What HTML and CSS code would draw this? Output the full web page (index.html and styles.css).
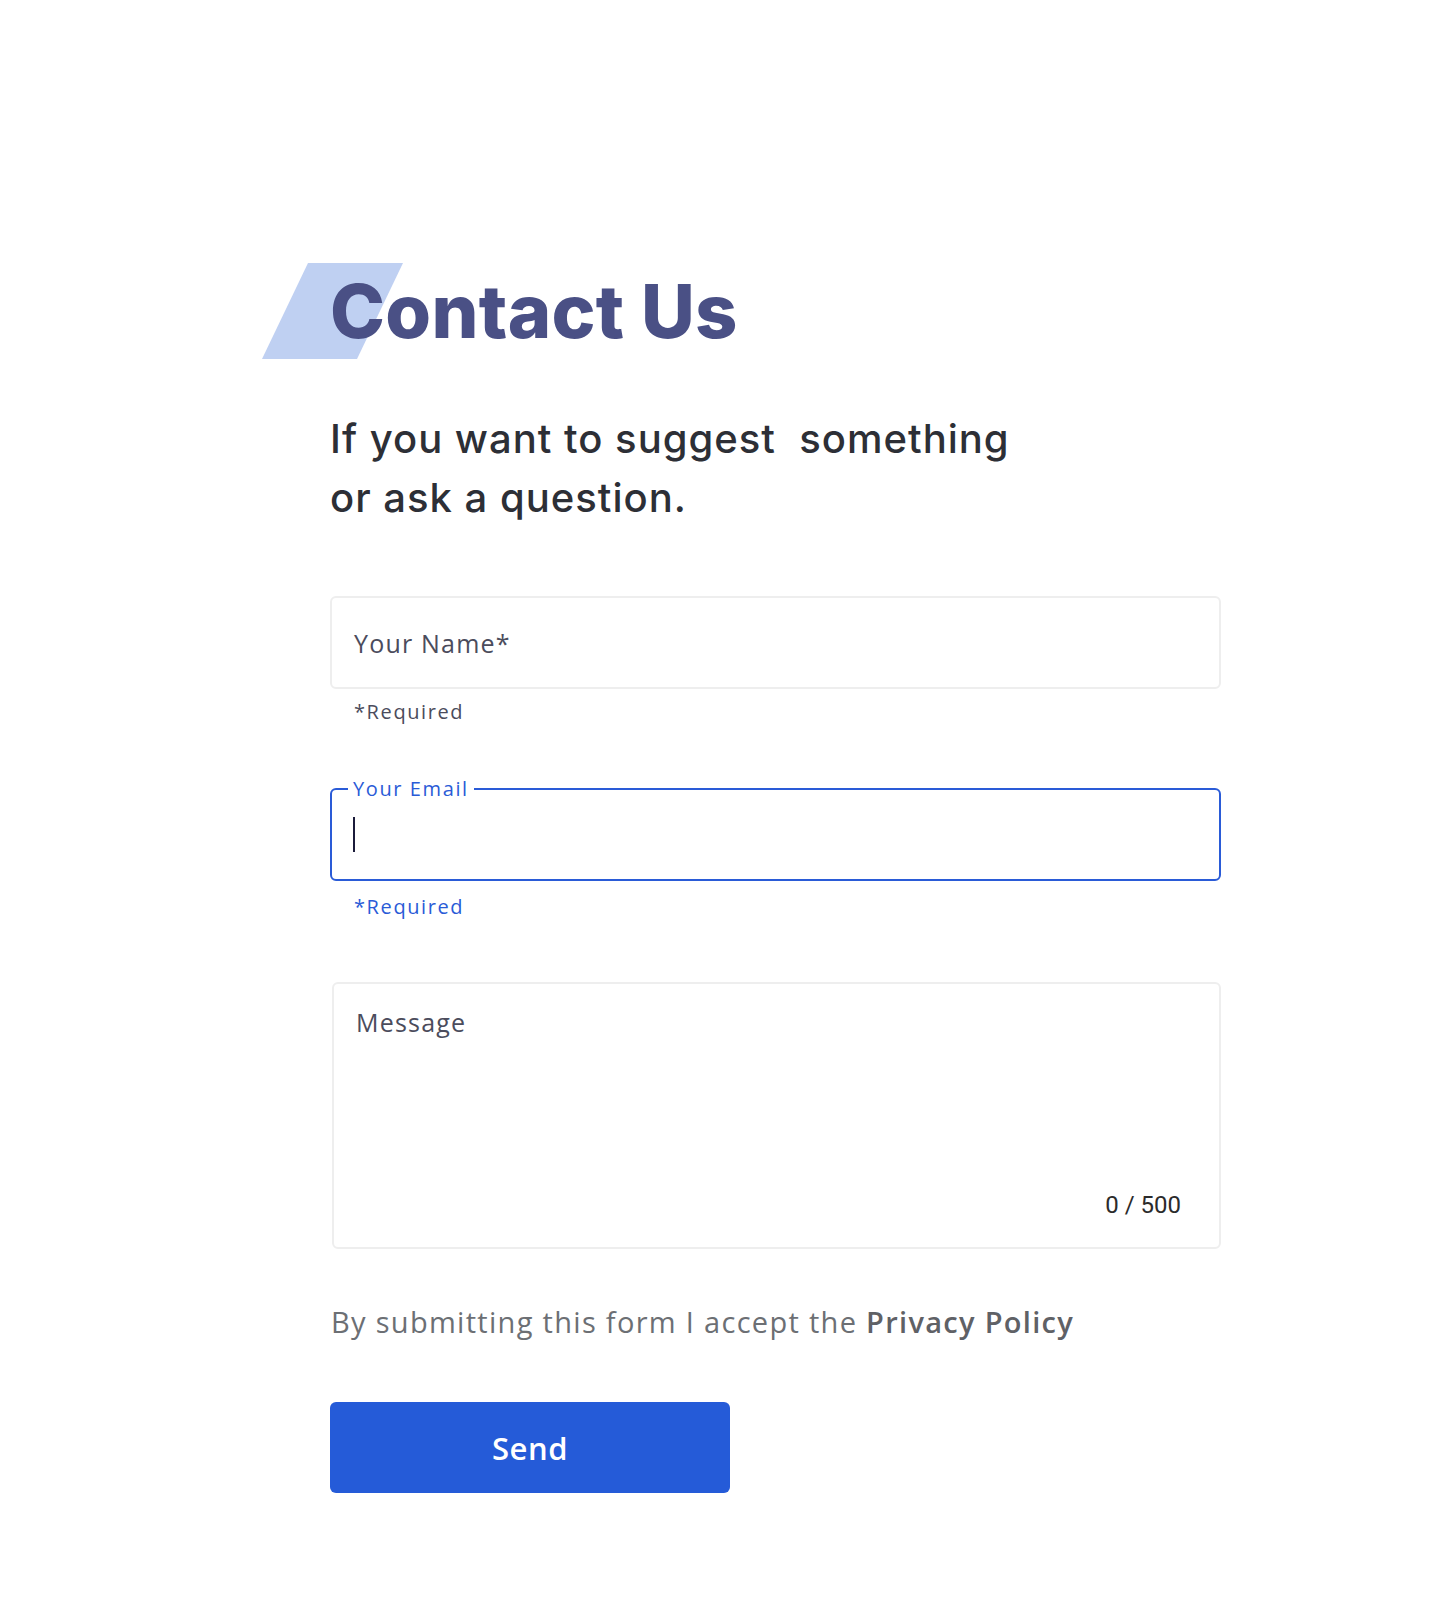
FILE: index.html
```html
<!DOCTYPE html>
<html lang="en">
<head>
<meta charset="utf-8">
<title>Contact Us</title>
<link rel="stylesheet" href="styles.css">
</head>
<body>
<main class="contact">
  <header class="contact-head">
    <h1 class="title">Contact Us</h1>
  </header>
  <p class="lead">If you want to suggest&nbsp; something<br>or ask a question.</p>
  <form class="form">
    <div class="field field-name">
      <div class="box"><span class="placeholder">Your Name*</span></div>
      <div class="hint">*Required</div>
    </div>
    <div class="field field-email">
      <div class="box box-focused">
        <span class="float-label">Your Email</span>
        <span class="caret"></span>
      </div>
      <div class="hint hint-focused">*Required</div>
    </div>
    <div class="box area">
      <span class="placeholder">Message</span>
      <span class="counter">0 / 500</span>
    </div>
    <p class="terms">By submitting this form I accept the <strong>Privacy Policy</strong></p>
    <button type="button" class="send">Send</button>
  </form>
</main>
</body>
</html>
```

FILE: styles.css
```css
* { box-sizing: border-box; }

html, body {
  margin: 0;
  background: #ffffff;
}

body {
  font-family: "Open Sans", "Liberation Sans", sans-serif;
  color: #4b4c5c;
}

.contact {
  width: 891px;
  margin-left: 330px;
  padding-top: 263px;
  padding-bottom: 100px;
}

.contact-head {
  height: 96px;
  display: flex;
  align-items: center;
  position: relative;
}

.contact-head::before {
  content: "";
  position: absolute;
  left: -45px;
  top: 0;
  width: 95px;
  height: 96px;
  background: #bfd0f2;
  transform: skewX(-25.6deg);
}

.title {
  position: relative;
  margin: 0;
  font-family: Inter, "Liberation Sans", sans-serif;
  font-weight: 800;
  font-size: 74px;
  line-height: 1;
  letter-spacing: 0.3px;
  color: #4a5085;
}

.lead {
  margin: 50px 0 0;
  font-family: Inter, "Liberation Sans", sans-serif;
  font-weight: 500;
  font-size: 40px;
  line-height: 59px;
  letter-spacing: 1px;
  color: #2d2f36;
}

.form {
  margin-top: 69px;
  display: flex;
  flex-direction: column;
  align-items: flex-start;
}

.field {
  width: 100%;
}

.box {
  position: relative;
  width: 100%;
  height: 93px;
  border: 2px solid #eeeeee;
  border-radius: 6px;
  display: flex;
  align-items: center;
  padding-left: 22px;
}

.placeholder {
  font-size: 25px;
  letter-spacing: 1.2px;
  color: #4b4c5c;
}

.hint {
  margin: 11px 0 0 24px;
  font-size: 20px;
  line-height: 24px;
  letter-spacing: 1.6px;
  color: #4b4c5c;
}

.field-email {
  margin-top: 64px;
}

.box-focused {
  height: 93px;
  border-color: #2a5bd7;
  padding-left: 21px;
}

.float-label {
  position: absolute;
  left: 16px;
  top: -13px;
  padding: 0 5px;
  background: #ffffff;
  font-size: 20px;
  line-height: 24px;
  letter-spacing: 1.6px;
  color: #2a5bd7;
}

.caret {
  width: 2px;
  height: 35px;
  background: #1b1b3a;
}

.hint-focused {
  margin-top: 14px;
  color: #2a5bd7;
}

.area {
  margin-top: 63px;
  margin-left: 2px;
  width: 889px;
  height: 267px;
  flex-direction: column;
  align-items: stretch;
  padding: 22px 38px 28px 22px;
}

.area .placeholder {
  line-height: 32px;
}

.counter {
  margin-top: auto;
  align-self: flex-end;
  font-family: Roboto, "Liberation Sans", sans-serif;
  font-size: 24px;
  line-height: 28px;
  letter-spacing: 0;
  color: #2b2b2b;
}

.terms {
  margin: 53px 0 0 1px;
  font-size: 29px;
  line-height: 40px;
  letter-spacing: 1.3px;
  color: #6c6f74;
}

.terms strong {
  font-weight: 600;
  color: #5f6166;
}

.send {
  margin-top: 60px;
  width: 400px;
  height: 91px;
  border: 0;
  border-radius: 6px;
  background: #255bd8;
  color: #ffffff;
  font-family: "Open Sans", "Liberation Sans", sans-serif;
  font-weight: 600;
  font-size: 31px;
  letter-spacing: 0.5px;
  cursor: pointer;
}
```
